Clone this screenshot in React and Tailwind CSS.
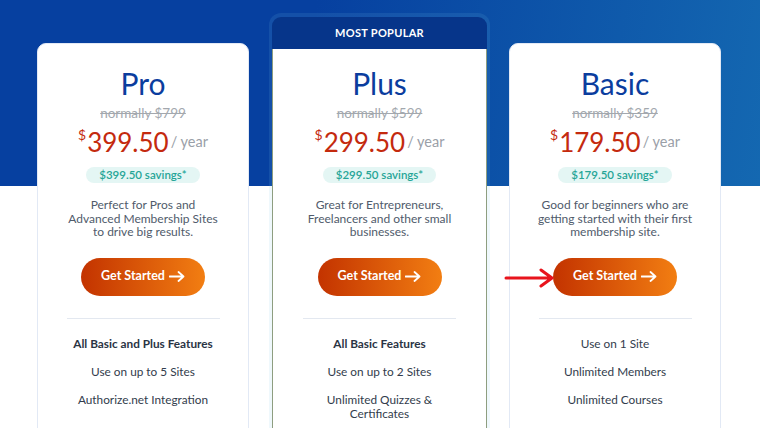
import React from "react";

const plans = [
  {
    name: "Pro",
    normally: "normally $799",
    price: "399.50",
    savings: "$399.50 savings*",
    desc: ["Perfect for Pros and", "Advanced Membership Sites", "to drive big results."],
    features: [
      { t: ["All Basic and Plus Features"], b: true },
      { t: ["Use on up to 5 Sites"] },
      { t: ["Authorize.net Integration"] },
    ],
    extra: "Unlimited Gift Memberships",
  },
  {
    name: "Plus",
    normally: "normally $599",
    price: "299.50",
    savings: "$299.50 savings*",
    desc: ["Great for Entrepreneurs,", "Freelancers and other small", "businesses."],
    features: [
      { t: ["All Basic Features"], b: true },
      { t: ["Use on up to 2 Sites"] },
      { t: ["Unlimited Quizzes &", "Certificates"] },
    ],
  },
  {
    name: "Basic",
    normally: "normally $359",
    price: "179.50",
    savings: "$179.50 savings*",
    desc: ["Good for beginners who are", "getting started with their first", "membership site."],
    features: [
      { t: ["Use on 1 Site"] },
      { t: ["Unlimited Members"] },
      { t: ["Unlimited Courses"] },
    ],
    extra: "Unlimited Lessons",
  },
];

function Arrow() {
  return (
    <svg width="16" height="11" viewBox="0 0 16 11" fill="none" className="ml-[4px]">
      <path d="M0.5 5.5H14.5M9.5 1L14.5 5.5L9.5 10" stroke="white" strokeWidth="1.8" strokeLinecap="round" strokeLinejoin="round" />
    </svg>
  );
}

function CardBody({ p }) {
  return (
    <div className="flex flex-col items-center text-center">
      <div className="text-[30px] leading-[36px] text-[#0b3d9e] font-normal">{p.name}</div>
      <div className="mt-[3px] text-[13.5px] leading-[18px] text-[#a3a8ae] line-through">{p.normally}</div>
      <div className="mt-[4px] flex items-start h-[32px]">
        <span className="text-[14px] leading-[16px] text-[#c42a0e] mt-[1px] mr-[1px]">$</span>
        <span className="text-[26px] leading-[32px] text-[#c42a0e]">{p.price}</span>
        <span className="text-[14.5px] leading-[18px] text-[#9aa0a8] mt-[7px] ml-[2px]">/ year</span>
      </div>
      <div className="mt-[9px] h-[16px] px-[13px] rounded-full bg-[#e4f6f4] text-[11.5px] leading-[16px] font-semibold text-[#26a597]">
        {p.savings}
      </div>
      <div className="mt-[15px] text-[12px] leading-[13.5px] text-[#505b6b]">
        {p.desc.map((l) => (
          <div key={l}>{l}</div>
        ))}
      </div>
      <div className="mt-[19px] h-[38px] w-[124px] rounded-full bg-[linear-gradient(90deg,#c33300,#f27e12)] flex items-center justify-center text-white text-[12.5px] font-bold">
        Get Started
        <Arrow />
      </div>
      <div className="mt-[22px] h-px w-[153px] bg-[#e3e8f0]" />
      <div className="mt-[18px] flex flex-col gap-[14px] text-[11.8px] leading-[14px] text-[#323c4c]">
        {p.features.map((f, i) => (
          <div key={i} className={f.b ? "font-bold text-[#2a3444]" : ""}>
            {f.t.map((l) => (
              <div key={l}>{l}</div>
            ))}
          </div>
        ))}
        {p.extra && <div className="mt-[5px]">{p.extra}</div>}
      </div>
    </div>
  );
}

export default function App() {
  return (
    <div
      className="relative w-[760px] h-[428px] overflow-hidden bg-white bg-[linear-gradient(100deg,#0640a0_40%,#1468b1)] bg-no-repeat bg-[length:100%_186px]"
      style={{ fontFamily: "Lato, 'Noto Sans', sans-serif" }}
    >
      <div className="flex items-start pl-[37px] pt-[13px]">
        <div className="mt-[30px] w-[212px] h-[420px] bg-white rounded-t-[9px] border border-[#e2e9f5] pt-[21px]">
          <CardBody p={plans[0]} />
        </div>
        <div className="ml-[20px] w-[221px] h-[430px] rounded-t-[12px] bg-[rgba(120,200,230,0.12)] px-[3px] pt-[4px]">
          <div className="h-[32px] rounded-t-[9px] bg-[#06358a] flex items-center justify-center text-white text-[11px] font-bold tracking-[0.3px]">
            MOST POPULAR
          </div>
          <div className="h-[400px] bg-white border-x border-[#8e9e80] pt-[16px]">
            <CardBody p={plans[1]} />
          </div>
        </div>
        <div className="ml-[19px] mt-[30px] w-[212px] h-[420px] bg-white rounded-t-[9px] border border-[#e2e9f5] pt-[21px]">
          <CardBody p={plans[2]} />
        </div>
      </div>
      <svg className="absolute left-[504px] top-[267px]" width="52" height="22" viewBox="0 0 52 22" fill="none">
        <path d="M2 11H48M37 3L48 11L37 19" stroke="#e8141c" strokeWidth="3" strokeLinecap="round" strokeLinejoin="round" />
      </svg>
    </div>
  );
}
